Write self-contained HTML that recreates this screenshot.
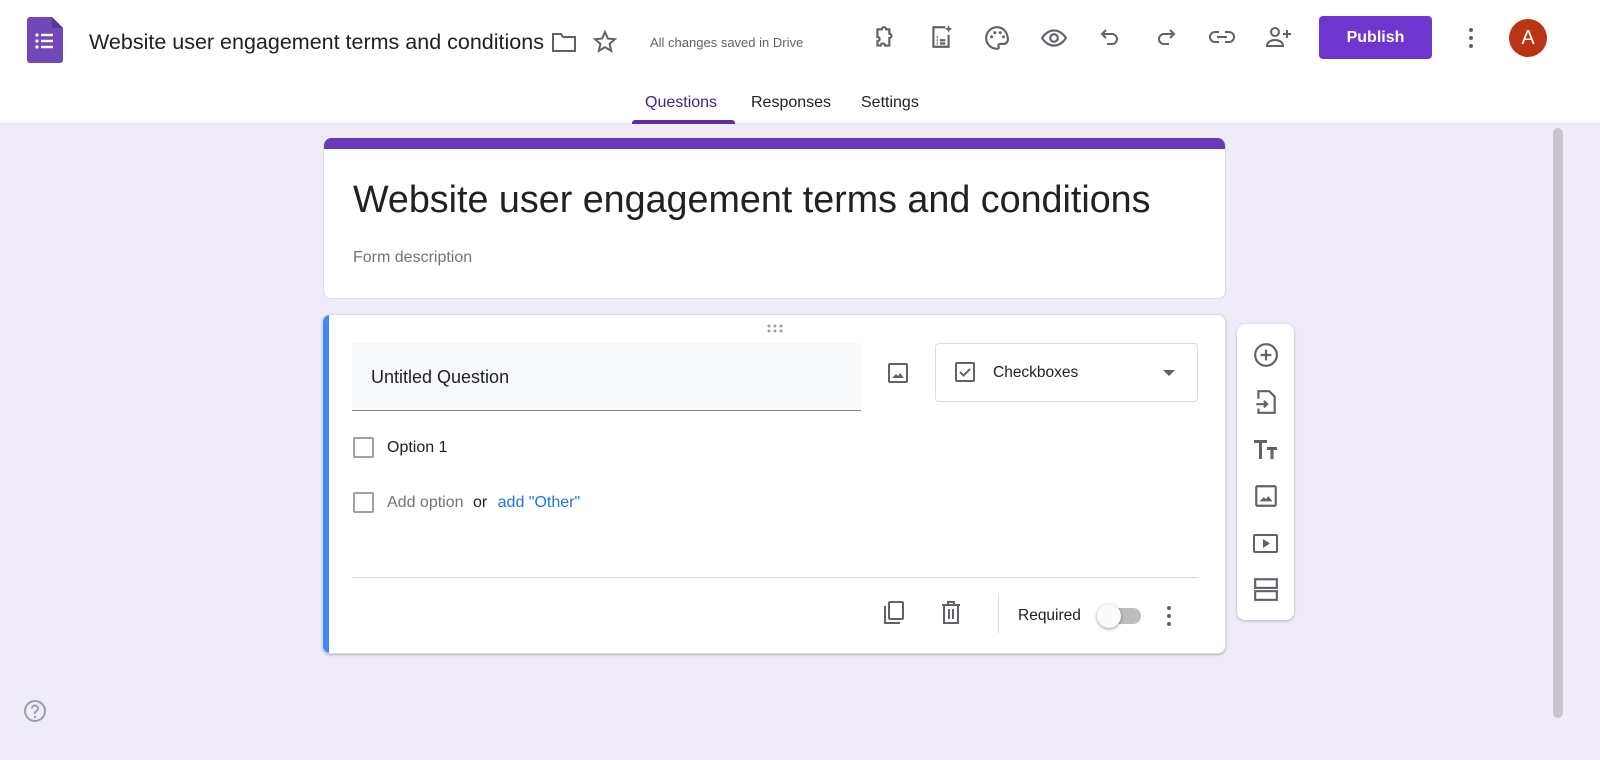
<!DOCTYPE html>
<html><head><style>
*{box-sizing:border-box;margin:0;padding:0}
body{width:1600px;height:760px;overflow:hidden;background:#f0ebf8;font-family:"Liberation Sans",Arial,sans-serif;position:relative;color:#202124}
.hdr{position:absolute;left:0;top:0;width:1600px;height:124px;background:#fff;border-bottom:1px solid #e0dcea}
.abs{position:absolute}
svg{position:absolute}
.ic{fill:none;stroke:#5f6368;stroke-width:2}
.tab{position:absolute;top:94px;font-size:16px;color:#202124}
.card{position:absolute;background:#fff;border-radius:8px;border:1px solid #dadce0}
</style></head><body>
<div class="hdr">
  <svg style="left:27px;top:17px" width="36" height="46" viewBox="0 0 36 46"><path d="M3 0h22l11 11v32a3 3 0 0 1-3 3H3a3 3 0 0 1-3-3V3a3 3 0 0 1 3-3z" fill="#7248b9"/><path d="M25 0l11 11H25z" fill="#5b3598"/><g fill="#fff"><circle cx="10" cy="18" r="1.6"/><circle cx="10" cy="24" r="1.6"/><circle cx="10" cy="30" r="1.6"/><rect x="14" y="16.8" width="12" height="2.4"/><rect x="14" y="22.8" width="12" height="2.4"/><rect x="14" y="28.8" width="12" height="2.4"/></g></svg>
  <div class="abs" style="left:89px;top:30px;font-size:21.5px;color:#202124;white-space:nowrap;width:455px;overflow:hidden">Website user engagement terms and conditions</div>
  <svg style="left:551px;top:31px" width="26" height="22" viewBox="0 0 26 22"><path class="ic" d="M2 3h8l2 3h12v14H2z"/></svg>
  <svg style="left:593px;top:30px" width="24" height="24" viewBox="0 0 24 24"><path class="ic" stroke-width="1.6" d="M12 2l2.9 6.6 7.1.6-5.4 4.7 1.6 7-6.2-3.7-6.2 3.7 1.6-7L2 9.2l7.1-.6z"/></svg>
  <div class="abs" style="left:650px;top:35px;font-size:13px;color:#5f6368">All changes saved in Drive</div>
  <svg style="left:872px;top:25px" width="26" height="26" viewBox="0 0 24 24"><path class="ic" d="M5 4h4a2 2 0 0 1 4 0h3v4a2 2 0 0 1 0 4v7h-4a2 2 0 0 0-4 0H5v-4a2 2 0 0 0 0-4z"/></svg>
  <svg style="left:928px;top:24px" width="26" height="26" viewBox="0 0 24 24"><path class="ic" d="M16 3H5v18h14V10"/><path class="ic" d="M8 12h1M8 15h1M8 18h1M11 15h5M11 18h5"/><path d="M19 1l1 2.5 2.5 1-2.5 1-1 2.5-1-2.5-2.5-1 2.5-1z" fill="#5f6368"/></svg>
  <svg style="left:984px;top:25px" width="26" height="26" viewBox="0 0 24 24"><path class="ic" d="M12 2a10 10 0 0 0 0 20c1.5 0 2-1 1.5-2-.6-1.2 0-2.5 1.5-2.5H18a4 4 0 0 0 4-4C22 6.5 17.5 2 12 2z"/><circle cx="7" cy="11" r="1.4" fill="#5f6368"/><circle cx="10" cy="7" r="1.4" fill="#5f6368"/><circle cx="15" cy="7" r="1.4" fill="#5f6368"/><circle cx="18" cy="11" r="1.4" fill="#5f6368"/></svg>
  <svg style="left:1040px;top:25px" width="28" height="26" viewBox="0 0 24 24"><path class="ic" d="M1 12s4-7 11-7 11 7 11 7-4 7-11 7S1 12 1 12z"/><circle class="ic" cx="12" cy="12" r="3.5"/></svg>
  <svg style="left:1098px;top:25px" width="24" height="26" viewBox="0 0 24 24"><path class="ic" d="M8 4L4 8l4 4M4 8h10a5 5 0 0 1 0 10H9"/></svg>
  <svg style="left:1154px;top:25px" width="24" height="26" viewBox="0 0 24 24"><path class="ic" d="M16 4l4 4-4 4M20 8H10a5 5 0 0 0 0 10h5"/></svg>
  <svg style="left:1208px;top:25px" width="30" height="24" viewBox="0 0 30 24"><path class="ic" d="M11 7H7a5 5 0 0 0 0 10h4M17 7h4a5 5 0 0 1 0 10h-4M9 12h10"/></svg>
  <svg style="left:1264px;top:24px" width="30" height="26" viewBox="0 0 30 26"><circle class="ic" cx="11" cy="8" r="4"/><path class="ic" d="M3 22c0-4 4-6 8-6s8 2 8 6zM23 6v8M19 10h8"/></svg>
  <div class="abs" style="left:1319px;top:16px;width:113px;height:43px;background:#6f35cf;border-radius:4px;color:#fff;font-size:16px;font-weight:bold;text-align:center;line-height:43px">Publish</div>
  <svg style="left:1466px;top:26px" width="10" height="24"><circle cx="5" cy="4" r="2" fill="#5f6368"/><circle cx="5" cy="12" r="2" fill="#5f6368"/><circle cx="5" cy="20" r="2" fill="#5f6368"/></svg>
  <div class="abs" style="left:1509px;top:19px;width:38px;height:38px;border-radius:50%;background:#b93412;color:#fff;font-size:20px;text-align:center;line-height:38px">A</div>
  <div class="tab" style="left:645px;color:#3f1f8c">Questions</div>
  <div class="abs" style="left:632px;top:120px;width:103px;height:4px;background:#5a2ea6;border-radius:3px 3px 0 0"></div>
  <div class="tab" style="left:751px">Responses</div>
  <div class="tab" style="left:861px">Settings</div>
</div>
<div class="abs" style="left:1553px;top:128px;width:10px;height:590px;background:#c8c5cc;border-radius:5px"></div>

<div class="card" style="left:323px;top:138px;width:903px;height:161px;overflow:hidden;border-top:none">
  <div class="abs" style="left:0;top:0;width:903px;height:11px;background:#673ab7"></div>
  <div class="abs" style="left:29px;top:40px;font-size:37.7px;color:#202124;white-space:nowrap">Website user engagement terms and conditions</div>
  <div class="abs" style="left:29px;top:111px;font-size:16px;color:#70757a">Form description</div>
</div>

<div class="card" style="left:322px;top:314px;width:904px;height:340px;overflow:hidden;box-shadow:0 1px 2px rgba(0,0,0,.25)">
  <div class="abs" style="left:0;top:0;width:6px;height:340px;background:#4285f4"></div>
  <svg style="left:443px;top:9px" width="20" height="10"><g fill="#9aa0a6"><circle cx="3" cy="2" r="1.5"/><circle cx="9" cy="2" r="1.5"/><circle cx="15" cy="2" r="1.5"/><circle cx="3" cy="7" r="1.5"/><circle cx="9" cy="7" r="1.5"/><circle cx="15" cy="7" r="1.5"/></g></svg>
  <div class="abs" style="left:29px;top:28px;width:509px;height:68px;background:#f8f9fa;border-bottom:1px solid #80868b"></div>
  <div class="abs" style="left:48px;top:52px;font-size:18px">Untitled Question</div>
  <svg style="left:563px;top:46px" width="24" height="24" viewBox="0 0 24 24"><rect class="ic" x="3" y="3" width="18" height="18" rx="1"/><path d="M6 17l4-4 2 2 2-3 4 5z" fill="#5f6368"/></svg>
  <div class="abs" style="left:612px;top:28px;width:263px;height:59px;border:1px solid #dadce0;border-radius:4px"></div>
  <svg style="left:630px;top:45px" width="24" height="24" viewBox="0 0 24 24"><rect class="ic" x="3" y="3" width="18" height="18" rx="1"/><path class="ic" d="M7 12l3.5 3.5L17 9"/></svg>
  <div class="abs" style="left:670px;top:49px;font-size:15.5px">Checkboxes</div>
  <svg style="left:839px;top:54px" width="14" height="8"><path d="M1 1h12L7 7z" fill="#5f6368"/></svg>
  <div class="abs" style="left:30px;top:122px;width:21px;height:21px;border:2px solid #5f6368;border-radius:2px;opacity:.6"></div>
  <div class="abs" style="left:64px;top:124px;font-size:16px">Option 1</div>
  <div class="abs" style="left:30px;top:177px;width:21px;height:21px;border:2px solid #5f6368;border-radius:2px;opacity:.6"></div>
  <div class="abs" style="left:64px;top:179px;font-size:16px;color:#70757a">Add option <span style="color:#202124;margin-left:5px">or</span> <span style="color:#1a73e8;margin-left:6px">add "Other"</span></div>
  <div class="abs" style="left:29px;top:262px;width:846px;height:1px;background:#dadce0"></div>
  <svg style="left:559px;top:285px" width="24" height="26" viewBox="0 0 24 26"><path class="ic" d="M3 6v17h15"/><rect class="ic" x="7" y="2" width="14" height="17" rx="1"/></svg>
  <svg style="left:616px;top:285px" width="24" height="26" viewBox="0 0 24 26"><path class="ic" d="M3 5h18M9 5V2h6v3M5 5v18h14V5M10 9v10M14 9v10"/></svg>
  <div class="abs" style="left:675px;top:278px;width:1px;height:40px;background:#dadce0"></div>
  <div class="abs" style="left:695px;top:292px;font-size:15.5px">Required</div>
  <div class="abs" style="left:778px;top:293px;width:40px;height:16px;border-radius:8px;background:#bdbdbd"></div>
  <div class="abs" style="left:774px;top:289px;width:24px;height:24px;border-radius:50%;background:#fafafa;box-shadow:0 1px 3px rgba(0,0,0,.4)"></div>
  <svg style="left:842px;top:289px" width="8" height="24"><circle cx="4" cy="4" r="2" fill="#5f6368"/><circle cx="4" cy="12" r="2" fill="#5f6368"/><circle cx="4" cy="20" r="2" fill="#5f6368"/></svg>
</div>

<div class="card" style="left:1237px;top:324px;width:57px;height:296px;box-shadow:0 1px 3px rgba(0,0,0,.25);border:none">
  <svg style="left:16px;top:18px" width="26" height="26" viewBox="0 0 24 24"><circle class="ic" cx="12" cy="12" r="10"/><path class="ic" d="M12 7v10M7 12h10"/></svg>
  <svg style="left:16px;top:65px" width="26" height="26" viewBox="0 0 24 24"><path class="ic" d="M5 9V2h10l5 5v15H5v-4M3 14h10M10 11l3 3-3 3"/></svg>
  <svg style="left:15px;top:113px" width="28" height="24" viewBox="0 0 28 24"><path d="M2 3h13v3h-5v16H7V6H2zM15 10h10v3h-3.5v9h-3v-9H15z" fill="#5f6368"/></svg>
  <svg style="left:16px;top:159px" width="26" height="26" viewBox="0 0 24 24"><rect class="ic" x="3" y="3" width="18" height="18" rx="1"/><path d="M6 17l4-4 2 2 2-3 4 5z" fill="#5f6368"/></svg>
  <svg style="left:15px;top:206px" width="28" height="26" viewBox="0 0 28 24"><rect class="ic" x="2" y="4" width="23" height="17" rx="1"/><path d="M11 8v9l7-4.5z" fill="#5f6368"/></svg>
  <svg style="left:16px;top:252px" width="26" height="26" viewBox="0 0 24 24"><rect class="ic" x="2" y="3" width="20" height="8"/><rect class="ic" x="2" y="14" width="20" height="8"/></svg>
</div>

<svg style="left:23px;top:699px" width="24" height="24" viewBox="0 0 24 24"><circle cx="12" cy="12" r="10" fill="none" stroke="#9aa0a6" stroke-width="2"/><path d="M9 9.5a3 3 0 1 1 4 2.8c-.8.4-1 1-1 1.7V15" fill="none" stroke="#9aa0a6" stroke-width="2"/><circle cx="12" cy="18" r="1.2" fill="#9aa0a6"/></svg>
</body></html>
